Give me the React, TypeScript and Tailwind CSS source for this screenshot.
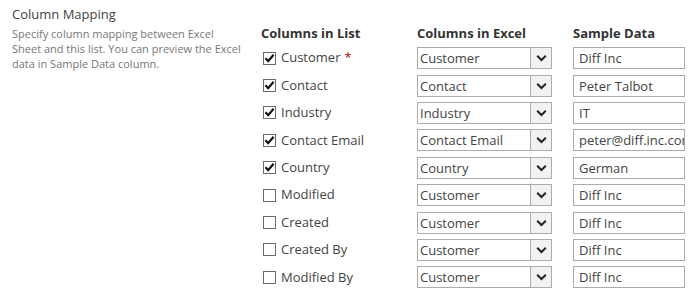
const font = { fontFamily: '"Open Sans", "Noto Sans", sans-serif' };

interface Row {
  name: string;
  checked: boolean;
  required?: boolean;
  excel: string;
  sample: string;
}

const rows: Row[] = [
  { name: "Customer", checked: true, required: true, excel: "Customer", sample: "Diff Inc" },
  { name: "Contact", checked: true, excel: "Contact", sample: "Peter Talbot" },
  { name: "Industry", checked: true, excel: "Industry", sample: "IT" },
  { name: "Contact Email", checked: true, excel: "Contact Email", sample: "peter@diff.inc.com" },
  { name: "Country", checked: true, excel: "Country", sample: "German" },
  { name: "Modified", checked: false, excel: "Customer", sample: "Diff Inc" },
  { name: "Created", checked: false, excel: "Customer", sample: "Diff Inc" },
  { name: "Created By", checked: false, excel: "Customer", sample: "Diff Inc" },
  { name: "Modified By", checked: false, excel: "Customer", sample: "Diff Inc" },
];

function CheckBox({ checked }: { checked: boolean }) {
  return (
    <span className="flex h-[13px] w-[13px] shrink-0 items-center justify-center border border-[#6b6b6b] bg-white">
      {checked && (
        <svg width="11" height="11" viewBox="0 0 11 11">
          <path d="M1.5 5.3 L4.2 8.2 L9.6 1.8" fill="none" stroke="#111" strokeWidth="2.2" />
        </svg>
      )}
    </span>
  );
}

function Select({ value }: { value: string }) {
  return (
    <div className="flex h-[22px] w-[135px] border border-[#ababab] bg-white">
      <div className="flex-1 truncate pl-[2px] text-[13px] leading-[20px] text-[#444]">{value}</div>
      <div className="flex w-[21px] items-center justify-center border-l border-[#ababab] bg-[#f2f2f2]">
        <svg width="11" height="8" viewBox="0 0 11 8">
          <path d="M1.2 1.8 L5.5 6 L9.8 1.8" fill="none" stroke="#222" strokeWidth="2" />
        </svg>
      </div>
    </div>
  );
}

export default function App() {
  return (
    <div className="flex h-[291px] w-[696px] bg-white text-[#444]" style={font}>
      <div className="w-[261px] shrink-0 pl-[12px] pt-[5px]">
        <div className="text-[13px] leading-[18px] text-[#444]">Column Mapping</div>
        <p className="mt-[3px] text-[11px] leading-[15px] whitespace-nowrap text-[#777]">
          Specify column mapping between Excel
          <br />
          Sheet and this list. You can preview the Excel
          <br />
          data in Sample Data column.
        </p>
      </div>
      <div className="flex flex-col pt-[24px]">
        <div className="flex h-[19px] text-[13px] font-bold leading-[18px] text-[#333]">
          <div className="w-[156px]">Columns in List</div>
          <div className="w-[156px]">Columns in Excel</div>
          <div>Sample Data</div>
        </div>
        <div className="mt-[2px] flex flex-col">
          {rows.map((r) => (
            <div key={r.name} className="flex h-[27.4px] items-center">
              <div className="flex w-[156px] items-center gap-[5px] pl-[2px] text-[13px]">
                <CheckBox checked={r.checked} />
                <span className="text-[#444]">
                  {r.name}
                  {r.required && <span className="ml-[4px] text-[#bf0000]">*</span>}
                </span>
              </div>
              <div className="w-[156px]">
                <Select value={r.excel} />
              </div>
              <div className="h-[22px] w-[112px] overflow-hidden border border-[#ababab] bg-white pl-[5px] text-[13px] leading-[20px] whitespace-nowrap text-[#444]">
                {r.sample}
              </div>
            </div>
          ))}
        </div>
      </div>
    </div>
  );
}
